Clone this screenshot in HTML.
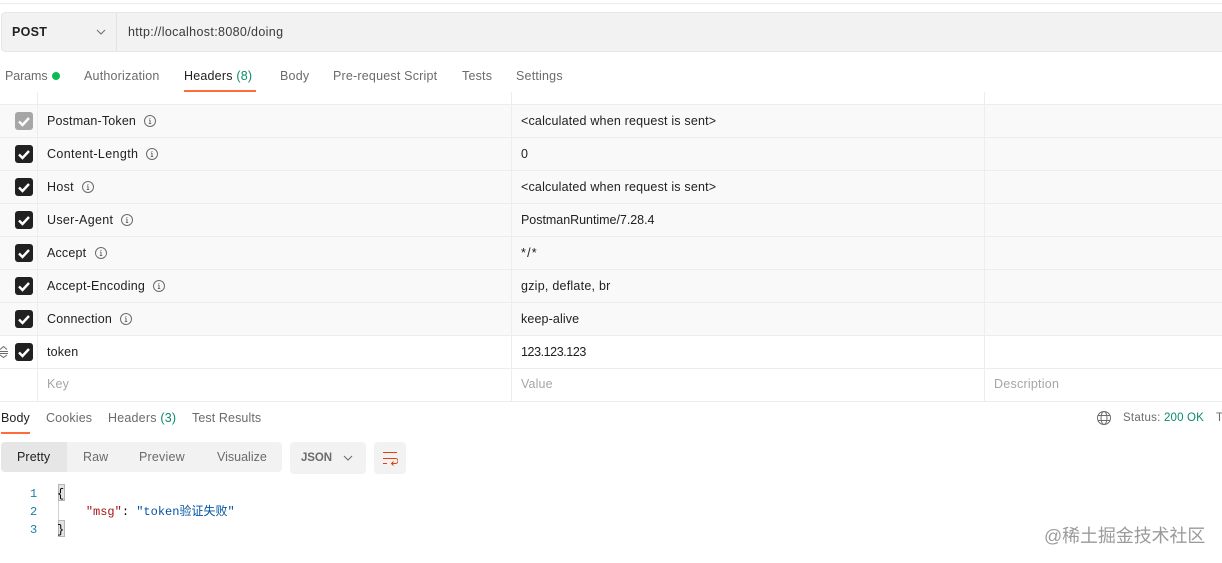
<!DOCTYPE html>
<html><head><meta charset="utf-8"><style>
html,body{margin:0;padding:0;background:#fff}
#p{position:relative;width:1222px;height:563px;overflow:hidden;background:#fff;font-family:"Liberation Sans","Noto Sans CJK SC",sans-serif;font-size:12.5px;color:#212121}
#p div,#p svg{position:absolute}
.t{white-space:nowrap;line-height:16px}
.g{color:#6b6b6b}
.row{left:0;width:1222px;height:32px;background:#f9f9f9;border-top:1px solid #ededed}
.vl{width:1px;background:#ededed}
.cb{left:15px;width:18px;height:18px;border-radius:3px;background:#212121}
.mono{font-family:"Liberation Mono","Noto Sans CJK SC",monospace;font-size:12px;line-height:18px;white-space:pre}
</style></head><body><div id="p">
<div style="left:0;top:3px;width:1222px;height:1px;background:#ededed"></div>
<div style="left:1px;top:12px;width:1225px;height:38px;background:#f2f2f2;border:1px solid #e6e6e6;border-radius:4px"></div>
<div style="left:116px;top:13px;width:1px;height:38px;background:#e3e3e3"></div>
<div class="t" style="left:12px;top:24px;font-weight:bold;color:#212121;letter-spacing:.3px">POST</div>
<svg style="left:96px;top:29px" width="10" height="6" viewBox="0 0 10 6"><path d="M1 1l4 4 4-4" fill="none" stroke="#6b6b6b" stroke-width="1"/></svg>
<div class="t" style="left:128px;top:24px;color:#3a3a3a;letter-spacing:.35px">http://localhost:8080/doing</div>

<div class="t g" style="left:5px;top:68px;letter-spacing:-.1px">Params</div>
<div style="left:52px;top:72px;width:8px;height:8px;border-radius:50%;background:#0cbb52"></div>
<div class="t g" style="left:84px;top:68px;letter-spacing:.2px">Authorization</div>
<div class="t" style="left:184px;top:68px;letter-spacing:.2px;color:#212121">Headers <span style="color:#0b8a6d">(8)</span></div>
<div style="left:184px;top:90px;width:72px;height:2px;background:#ff6c37"></div>
<div class="t g" style="left:280px;top:68px;letter-spacing:.2px">Body</div>
<div class="t g" style="left:333px;top:68px;letter-spacing:.2px">Pre-request Script</div>
<div class="t g" style="left:462px;top:68px;letter-spacing:.2px">Tests</div>
<div class="t g" style="left:516px;top:68px;letter-spacing:.2px">Settings</div>

<div class="row" style="top:104px"></div>
<div class="row" style="top:137px"></div>
<div class="row" style="top:170px"></div>
<div class="row" style="top:203px"></div>
<div class="row" style="top:236px"></div>
<div class="row" style="top:269px"></div>
<div class="row" style="top:302px"></div>
<div class="row" style="top:335px;background:#fff"></div>
<div class="row" style="top:368px;background:#fff;border-bottom:1px solid #ededed"></div>
<div class="vl" style="left:37px;top:92px;height:309px"></div>
<div class="vl" style="left:511px;top:92px;height:309px"></div>
<div class="vl" style="left:984px;top:92px;height:309px"></div>

<div class="cb" style="top:112px;background:#a6a6a6"></div>
<div class="cb" style="top:145px"></div>
<div class="cb" style="top:178px"></div>
<div class="cb" style="top:211px"></div>
<div class="cb" style="top:244px"></div>
<div class="cb" style="top:277px"></div>
<div class="cb" style="top:310px"></div>
<div class="cb" style="top:343px"></div>
<svg style="left:15px;top:112px" width="18" height="248" viewBox="0 0 18 248" fill="none" stroke="#fff" stroke-width="2.4">
<path d="M4 9.500l3.500 3.500 6.500-7"/><path d="M4 42.500l3.500 3.500 6.500-7"/><path d="M4 75.500l3.500 3.500 6.500-7"/><path d="M4 108.500l3.500 3.500 6.500-7"/><path d="M4 141.500l3.500 3.500 6.500-7"/><path d="M4 174.500l3.500 3.500 6.500-7"/><path d="M4 207.500l3.500 3.500 6.500-7"/><path d="M4 240.500l3.500 3.500 6.500-7"/></svg>
<svg style="left:0;top:346px" width="9" height="12" viewBox="0 0 9 12" fill="none" stroke="#6b6b6b"><path d="M0 3.500L3.500 .5 7 3.500M0 5.500h8M0 7.500h8M0 9L3.500 11.500 7 9"/></svg>

<div class="t" style="left:47px;top:113px;letter-spacing:.17px">Postman-Token</div>
<div class="t" style="left:47px;top:146px;letter-spacing:.37px">Content-Length</div>
<div class="t" style="left:47px;top:179px;letter-spacing:.3px">Host</div>
<div class="t" style="left:47px;top:212px;letter-spacing:.3px">User-Agent</div>
<div class="t" style="left:47px;top:245px;letter-spacing:.17px">Accept</div>
<div class="t" style="left:47px;top:278px;letter-spacing:.24px">Accept-Encoding</div>
<div class="t" style="left:47px;top:311px;letter-spacing:.17px">Connection</div>
<div class="t" style="left:47px;top:344px;letter-spacing:.17px">token</div>
<div class="t" style="left:47px;top:376px;color:#a6a6a6;letter-spacing:.17px">Key</div>

<svg style="left:0;top:0" width="170" height="330" fill="none" stroke="#6b6b6b">
<circle cx="150" cy="121" r="5.500"/><path d="M150 120v3.500M148.800 123.500h2.400M149 120h1M150 118v.9"/>
<circle cx="152" cy="154" r="5.500"/><path d="M152 153v3.500M150.800 156.500h2.400M151 153h1M152 151v.9"/>
<circle cx="88" cy="187" r="5.500"/><path d="M88 186v3.500M86.800 189.500h2.400M87 186h1M88 184v.9"/>
<circle cx="127" cy="220" r="5.500"/><path d="M127 219v3.500M125.800 222.500h2.400M126 219h1M127 217v.9"/>
<circle cx="101" cy="253" r="5.500"/><path d="M101 252v3.500M99.800 255.500h2.400M100 252h1M101 250v.9"/>
<circle cx="159" cy="286" r="5.500"/><path d="M159 285v3.500M157.800 288.500h2.400M158 285h1M159 283v.9"/>
<circle cx="126" cy="319" r="5.500"/><path d="M126 318v3.500M124.800 321.500h2.400M125 318h1M126 316v.9"/>
</svg>

<div class="t" style="left:521px;top:113px;letter-spacing:.19px">&lt;calculated when request is sent&gt;</div>
<div class="t" style="left:521px;top:146px">0</div>
<div class="t" style="left:521px;top:179px;letter-spacing:.19px">&lt;calculated when request is sent&gt;</div>
<div class="t" style="left:521px;top:212px;letter-spacing:-.03px">PostmanRuntime/7.28.4</div>
<div class="t" style="left:521px;top:245px;letter-spacing:1.2px">*/*</div>
<div class="t" style="left:521px;top:278px;letter-spacing:.24px">gzip, deflate, br</div>
<div class="t" style="left:521px;top:311px;letter-spacing:.12px">keep-alive</div>
<div class="t" style="left:521px;top:344px;letter-spacing:-.42px">123.123.123</div>
<div class="t" style="left:521px;top:376px;color:#a6a6a6;letter-spacing:.12px">Value</div>
<div class="t" style="left:994px;top:376px;color:#a6a6a6;letter-spacing:.24px">Description</div>

<div class="t" style="left:1px;top:410px;letter-spacing:.1px">Body</div>
<div style="left:1px;top:432px;width:29px;height:2px;background:#ff6c37"></div>
<div class="t g" style="left:46px;top:410px;letter-spacing:.15px">Cookies</div>
<div class="t g" style="left:108px;top:410px;letter-spacing:.2px">Headers <span style="color:#0b8a6d">(3)</span></div>
<div class="t g" style="left:192px;top:410px;letter-spacing:.1px">Test Results</div>

<svg style="left:1096px;top:410px" width="16" height="16" viewBox="0 0 16 16" fill="none" stroke="#6b6b6b"><circle cx="8" cy="8" r="6.500"/><ellipse cx="8" cy="8" rx="3" ry="6.500"/><path d="M2 5.500h12M2 10.500h12"/></svg>
<div class="t g" style="left:1123px;top:410px;font-size:11.500px;letter-spacing:.25px">Status:</div>
<div class="t" style="left:1164px;top:410px;font-size:11.500px;color:#0b8a6d;letter-spacing:.15px">200 OK</div>
<div class="t g" style="left:1216px;top:410px;font-size:11.500px">T</div>

<div style="left:1px;top:442px;width:281px;height:30px;background:#f2f2f2;border-radius:4px"></div>
<div style="left:1px;top:442px;width:66px;height:30px;background:#e6e6e6;border-radius:4px 0 0 4px"></div>
<div class="t" style="left:17px;top:449px;letter-spacing:.1px">Pretty</div>
<div class="t g" style="left:83px;top:449px;letter-spacing:.1px">Raw</div>
<div class="t g" style="left:139px;top:449px;letter-spacing:.2px">Preview</div>
<div class="t g" style="left:217px;top:449px;letter-spacing:0">Visualize</div>
<div style="left:290px;top:442px;width:76px;height:32px;background:#f2f2f2;border-radius:4px"></div>
<div class="t" style="left:301px;top:450px;font-size:11.500px;font-weight:bold;color:#6b6b6b;letter-spacing:-.1px">JSON</div>
<svg style="left:343px;top:455px" width="10" height="6" viewBox="0 0 10 6"><path d="M1 1l4 4 4-4" fill="none" stroke="#6b6b6b"/></svg>
<div style="left:374px;top:442px;width:32px;height:32px;background:#f2f2f2;border-radius:4px"></div>
<svg style="left:382px;top:451px" width="16" height="15" viewBox="0 0 16 15" fill="none" stroke="#e0400f"><path d="M1 1.500h14M1 7.500h12.500a2.500 2.500 0 0 1 0 5H9.500M1 12.500h4M11.500 10.500l-2 2 2 2"/></svg>

<div class="mono" style="left:30px;top:485px;color:#1a7fa8">1
2
3</div>
<div style="left:58px;top:484px;width:7px;height:17px;background:#e3e3e3;outline:1px solid #b5b5b5;outline-offset:-1px"></div>
<div style="left:58px;top:520px;width:7px;height:17px;background:#e3e3e3;outline:1px solid #b5b5b5;outline-offset:-1px"></div>
<div style="left:58px;top:501px;width:1px;height:19px;background:#d0d0d0"></div>
<div class="mono" style="left:57px;top:485px;color:#000">{
    <span style="color:#a31515">"msg"</span>: <span style="color:#0451a5">"token验证失败"</span>
}</div>

<div class="t" style="left:1044px;top:525px;font-size:17.900px;line-height:22px;color:#9a9a9a">@稀土掘金技术社区</div>
</div></body></html>
